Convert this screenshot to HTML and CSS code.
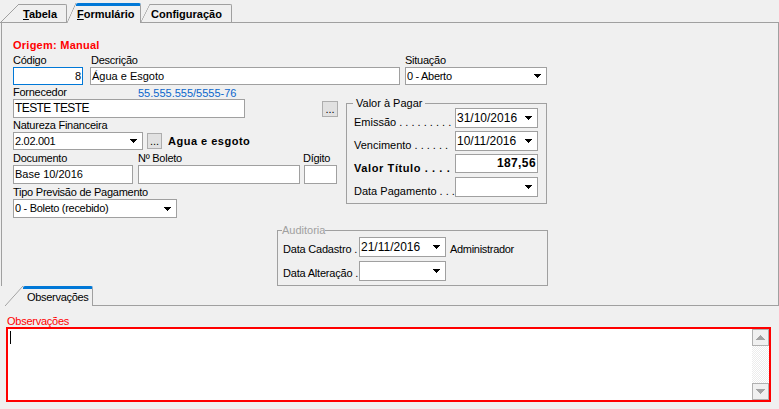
FILE: index.html
```html
<!DOCTYPE html>
<html lang="pt-BR">
<head>
    <meta charset="UTF-8">
    <title>Formulário</title>
    <link rel="stylesheet" href="styles.css">
</head>
<body>
    <div class="tabs">
        <div class="tab tab-tabela"><span class="tab-label"><u>T</u>abela</span></div>
        <div class="tab tab-form active"><span class="tab-label"><u>F</u>ormulário</span></div>
        <div class="tab tab-config"><span class="tab-label">Configuração</span></div>
    </div>

    <div class="page">
        <div class="origem">Origem: Manual</div>

        <div class="top-row">
            <div class="field f-codigo">
                <div class="lbl">Código</div>
                <div class="edit focus right">8</div>
            </div>
            <div class="field f-desc">
                <div class="lbl">Descrição</div>
                <div class="edit">Água e Esgoto</div>
            </div>
            <div class="field f-sit">
                <div class="lbl">Situação</div>
                <div class="combo"><span>0 - Aberto</span><svg class="arr" width="7" height="4" viewBox="0 0 7 4"><path d="M0 0h7v1h-1v1h-1v1h-1v1h-1v-1h-1v-1h-1v-1h-1z"/></svg></div>
            </div>
        </div>

        <div class="middle">
            <div class="left-col">
                <div class="lbl-row">
                    <span class="lbl l-forn">Fornecedor</span>
                    <span class="cnpj">55.555.555/5555-76</span>
                </div>
                <div class="line">
                    <div class="edit e-forn">TESTE TESTE</div>
                    <button class="dots b-forn">...</button>
                </div>

                <div class="lbl l-nat">Natureza Financeira</div>
                <div class="line">
                    <div class="combo c-nat"><span>2.02.001</span><svg class="arr" width="7" height="4" viewBox="0 0 7 4"><path d="M0 0h7v1h-1v1h-1v1h-1v1h-1v-1h-1v-1h-1v-1h-1z"/></svg></div>
                    <button class="dots b-nat">...</button>
                    <b class="nat-name">Agua e esgoto</b>
                </div>

                <div class="lbl-row l-doc">
                    <span class="lbl w-doc">Documento</span>
                    <span class="lbl w-bol">Nº Boleto</span>
                    <span class="lbl">Dígito</span>
                </div>
                <div class="line">
                    <div class="edit e-doc">Base 10/2016</div>
                    <div class="edit e-bol"></div>
                    <div class="edit e-dig"></div>
                </div>

                <div class="lbl l-tipo">Tipo Previsão de Pagamento</div>
                <div class="combo c-tipo"><span>0 - Boleto (recebido)</span><svg class="arr" width="7" height="4" viewBox="0 0 7 4"><path d="M0 0h7v1h-1v1h-1v1h-1v1h-1v-1h-1v-1h-1v-1h-1z"/></svg></div>
            </div>

            <fieldset class="group valor">
                <legend>Valor à Pagar</legend>
                <div class="grow first">
                    <span class="glbl">Emissão . . . . . . . . .</span>
                    <div class="combo date"><span>31/10/2016</span><svg class="arr" width="7" height="4" viewBox="0 0 7 4"><path d="M0 0h7v1h-1v1h-1v1h-1v1h-1v-1h-1v-1h-1v-1h-1z"/></svg></div>
                </div>
                <div class="grow">
                    <span class="glbl">Vencimento . . . . . .</span>
                    <div class="combo date"><span>10/11/2016</span><svg class="arr" width="7" height="4" viewBox="0 0 7 4"><path d="M0 0h7v1h-1v1h-1v1h-1v1h-1v-1h-1v-1h-1v-1h-1z"/></svg></div>
                </div>
                <div class="grow">
                    <span class="glbl bold">Valor Título . . . .</span>
                    <div class="edit valor-input right">187,56</div>
                </div>
                <div class="grow">
                    <span class="glbl">Data Pagamento . . .</span>
                    <div class="combo date"><span></span><svg class="arr" width="7" height="4" viewBox="0 0 7 4"><path d="M0 0h7v1h-1v1h-1v1h-1v1h-1v-1h-1v-1h-1v-1h-1z"/></svg></div>
                </div>
            </fieldset>
        </div>

        <fieldset class="group audit">
            <legend>Auditoria</legend>
            <div class="arow first">
                <span class="alb">Data Cadastro .</span>
                <div class="combo acombo"><span>21/11/2016</span><svg class="arr" width="7" height="4" viewBox="0 0 7 4"><path d="M0 0h7v1h-1v1h-1v1h-1v1h-1v-1h-1v-1h-1v-1h-1z"/></svg></div>
                <span class="usuario">Administrador</span>
            </div>
            <div class="arow">
                <span class="alb">Data Alteração .</span>
                <div class="combo acombo"><span></span><svg class="arr" width="7" height="4" viewBox="0 0 7 4"><path d="M0 0h7v1h-1v1h-1v1h-1v1h-1v-1h-1v-1h-1v-1h-1z"/></svg></div>
            </div>
        </fieldset>
    </div>

    <div class="subtabs">
        <div class="tab sub-obs active"><span class="tab-label">Observações</span></div>
        <div class="subtabs-fill"></div>
    </div>

    <div class="obs-lbl">Observações</div>
    <div class="memo">
        <div class="memo-text"><span class="caret"></span></div>
        <div class="vscroll">
            <div class="sb-btn"><svg width="9" height="5" viewBox="0 0 9 5"><path d="M4 0h1v1h1v1h1v1h1v1h1v1h-9v-1h1v-1h1v-1h1v-1h1z"/></svg></div>
            <div class="sb-track"></div>
            <div class="sb-btn"><svg width="9" height="5" viewBox="0 0 9 5"><path d="M0 0h9v1h-1v1h-1v1h-1v1h-1v1h-1v-1h-1v-1h-1v-1h-1v-1h-1z"/></svg></div>
        </div>
    </div>
</body>
</html>
```

FILE: styles.css
```css
* {
    box-sizing: border-box;
}
body {
    margin: 0;
    width: 779px;
    height: 409px;
    overflow: hidden;
    background: #f0f0f0;
    font-family: "Liberation Sans", Arial, sans-serif;
    font-size: 11px;
    line-height: 13px;
    color: #000;
}
svg {
    display: block;
    shape-rendering: crispEdges;
}

/* page control on top */
.tabs {
    display: flex;
    align-items: flex-end;
    height: 23px;
    padding-left: 1px;
    border-bottom: 1px solid #a0a0a0;
}
.tab {
    position: relative;
    display: flex;
    height: 18px;
}
.tab::before {
    content: "";
    position: absolute;
    left: 0;
    top: 0;
    bottom: 0;
    width: 18px;
    background: linear-gradient(to bottom right, transparent calc(50% - 0.7px), #a0a0a0 50%, #f0f0f0 calc(50% + 0.7px));
}
.tab-label {
    display: block;
    border-top: 1px solid #a0a0a0;
    border-right: 1px solid #a0a0a0;
    border-top-right-radius: 2px;
    padding-top: 3px;
    background: #f0f0f0;
    font-weight: bold;
    white-space: nowrap;
}
.tab.active {
    height: 20px;
    margin-bottom: -1px;
}
.tab.active .tab-label {
    border-top: 3px solid #0078d7;
    border-top-left-radius: 2px;
    padding-top: 2px;
}
.tab-tabela {
    padding-left: 18px;
}
.tab-tabela .tab-label {
    width: 48px;
    padding-left: 4px;
}
.tab-form {
    padding-left: 9px;
}
.tab-form::before,
.tab-config::before {
    width: 9px;
}
.tab-form .tab-label {
    width: 65px;
    padding-left: 1px;
}
.tab-config {
    padding-left: 9px;
}
.tab-config .tab-label {
    width: 82px;
    padding-left: 1px;
}

/* form page */
.page {
    width: 778px;
    height: 263px;
    margin-left: 1px;
    padding: 16px 0 0 11px;
    border-left: 1px solid #a0a0a0;
    border-right: 1px solid #a0a0a0;
}
.origem {
    color: #ff0000;
    font-weight: bold;
    letter-spacing: 0.25px;
}
.lbl {
    letter-spacing: -0.25px;
    white-space: nowrap;
}
.top-row {
    display: flex;
    margin-top: 2px;
}
.field {
    display: flex;
    flex-direction: column;
}
.f-codigo {
    width: 70px;
}
.f-desc {
    width: 310px;
    margin-left: 7px;
}
.f-desc .lbl {
    padding-left: 1px;
}
.f-sit {
    width: 142px;
    margin-left: 5px;
}

.edit {
    height: 18px;
    border: 1px solid #a0a0a0;
    background: #fff;
    padding: 0 1px;
    line-height: 16px;
    white-space: nowrap;
    overflow: hidden;
}
.edit.focus {
    border-color: #0078d7;
}
.right {
    text-align: right;
}
.combo {
    display: flex;
    align-items: center;
    height: 18px;
    border: 1px solid #a0a0a0;
    background: #fff;
    padding-left: 1px;
    letter-spacing: -0.3px;
    white-space: nowrap;
}
.combo span {
    flex: 1;
    overflow: hidden;
}
.arr {
    flex: none;
    margin-right: 5px;
}
.dots {
    flex: none;
    width: 16px;
    height: 16px;
    padding: 0;
    border: 1px solid #adadad;
    background: #e1e1e1;
    font-family: inherit;
    font-size: 11px;
    line-height: 12px;
    color: #000;
}

.middle {
    display: flex;
    align-items: flex-start;
    margin-top: 1px;
}
.left-col {
    width: 325px;
}
.lbl-row {
    display: flex;
    height: 13px;
}
.l-forn {
    width: 125px;
}
.cnpj {
    color: #0a66cc;
    line-height: 15px;
}
.line {
    display: flex;
    align-items: flex-start;
}
.e-forn {
    width: 232px;
    height: 19px;
    line-height: 17px;
    font-size: 12px;
    letter-spacing: -0.6px;
}
.b-forn {
    margin: 2px 0 0 auto;
}
.l-nat {
    margin-top: 1px;
}
.c-nat {
    width: 130px;
}
.b-nat {
    width: 15px;
    margin: 1px 0 0 4px;
}
.nat-name {
    margin-left: 6px;
    line-height: 18px;
    letter-spacing: 0.5px;
}
.l-doc {
    margin-top: 2px;
}
.w-doc {
    width: 125px;
}
.w-bol {
    width: 165px;
}
.e-doc,
.e-bol,
.e-dig {
    height: 19px;
    line-height: 17px;
}
.e-doc {
    width: 120px;
}
.e-bol {
    width: 162px;
    margin-left: 5px;
}
.e-dig {
    width: 33px;
    margin-left: 4px;
}
.l-tipo {
    margin-top: 2px;
}
.c-tipo {
    width: 164px;
    height: 19px;
}

/* group boxes */
.group {
    margin: 0;
    min-width: 0;
    border: 1px solid #a0a0a0;
}
.group legend {
    line-height: 12px;
}
.valor {
    width: 201px;
    margin: 11px 0 0 8px;
    padding: 0 8px 6px 7px;
}
.valor legend {
    padding: 0 3px;
    margin-left: -1px;
}
.grow {
    display: flex;
    height: 20px;
    margin-top: 3px;
}
.grow.first {
    margin-top: -1px;
}
.glbl {
    width: 101px;
    flex: none;
    align-self: flex-end;
    margin-bottom: -1px;
    white-space: nowrap;
}
.glbl.bold {
    font-weight: bold;
    letter-spacing: 0.6px;
}
.date {
    width: 83px;
    height: 20px;
    font-size: 12px;
    letter-spacing: 0;
}
.valor-input {
    width: 83px;
    height: 19px;
    font-size: 12px;
    font-weight: bold;
    letter-spacing: 0.4px;
}
.audit {
    width: 271px;
    margin: 6px 0 0 264px;
    padding: 0 4px 4px 5px;
}
.audit legend {
    padding: 0;
    margin-left: -1px;
    color: #a0a0a0;
}
.arow {
    display: flex;
    height: 20px;
    margin-top: 4px;
}
.arow.first {
    margin-top: 1px;
}
.alb {
    width: 76px;
    flex: none;
    align-self: flex-end;
    margin-bottom: 1px;
    white-space: nowrap;
    letter-spacing: -0.2px;
}
.acombo {
    width: 87px;
    height: 20px;
    font-size: 12px;
    letter-spacing: 0;
}
.usuario {
    align-self: flex-end;
    margin: 0 0 1px 4px;
    letter-spacing: -0.3px;
}

/* page control at the bottom */
.subtabs {
    display: flex;
    height: 20px;
}
.sub-obs {
    height: 20px;
    margin-left: 5px;
    padding-left: 18px;
}
.sub-obs .tab-label {
    width: 70px;
    padding-left: 4px;
    font-weight: normal;
    letter-spacing: -0.3px;
}
.tab.sub-obs {
    margin-bottom: 0;
}
.subtabs-fill {
    flex: 1;
    border-bottom: 1px solid #a0a0a0;
    border-right: 1px solid #a0a0a0;
}
.obs-lbl {
    margin: 9px 0 0 7px;
    line-height: 12px;
    color: #ff0000;
    letter-spacing: -0.25px;
}
.memo {
    display: flex;
    width: 765px;
    height: 75px;
    margin-left: 6px;
    border: 2px solid #ff0000;
    background: #fff;
}
.memo-text {
    flex: 1;
    padding: 2px 0 0 2px;
}
.caret {
    display: block;
    width: 1px;
    height: 13px;
    background: #000;
}
.vscroll {
    display: flex;
    flex-direction: column;
    width: 17px;
}
.sb-btn {
    display: flex;
    align-items: center;
    justify-content: center;
    height: 17px;
    border: 1px solid #b0b0b0;
    background: #f0f0f0;
    fill: #a3a3a3;
}
.sb-track {
    flex: 1;
    background: repeating-conic-gradient(#ececec 0 25%, #fff 0 50%) 0 0 / 2px 2px;
}
```
